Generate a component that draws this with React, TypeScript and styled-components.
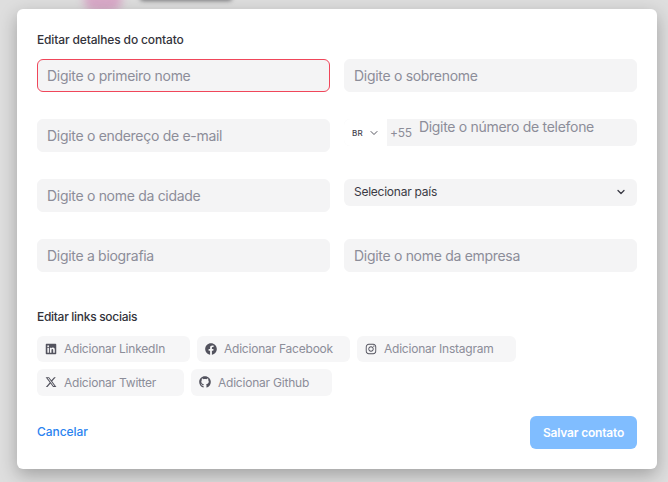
import React from 'react';
import styled, { createGlobalStyle } from 'styled-components';
import { FaFacebook, FaGithub, FaInstagram, FaLinkedin } from 'react-icons/fa';
import { FaXTwitter } from 'react-icons/fa6';
import { LuChevronDown } from 'react-icons/lu';

const GlobalStyle = createGlobalStyle`
    html, body {
        margin: 0;
        padding: 0;
        background: #dedede;
    }
    body {
        font-family: 'Inter', 'Liberation Sans', sans-serif;
    }
`;

const Page = styled.div`
    position: relative;
    width: 668px;
    height: 482px;
    overflow: hidden;
    background: #dedede;
    padding: 9px 11px 0 17px;
    box-sizing: border-box;
`;

const PinkBlob = styled.div`
    position: absolute;
    left: 84px;
    top: -12px;
    width: 38px;
    height: 24px;
    border-radius: 12px;
    background: #d9a9c8;
    filter: blur(4px);
`;

const DarkBlob = styled.div`
    position: absolute;
    left: 140px;
    top: -6px;
    width: 92px;
    height: 7px;
    border-radius: 4px;
    background: #77777a;
    filter: blur(2px);
`;

const Modal = styled.div`
    position: relative;
    width: 640px;
    height: 460px;
    box-sizing: border-box;
    padding: 23px 20px 20px;
    background: #ffffff;
    border-radius: 6px;
    box-shadow: 0 6px 18px rgba(0, 0, 0, 0.28);
    display: flex;
    flex-direction: column;
`;

const SectionTitle = styled.div<{ $spacing: number }>`
    font-size: 12px;
    line-height: 15px;
    font-weight: 500;
    letter-spacing: ${(p) => p.$spacing}px;
    color: #33333b;
`;

const FormGrid = styled.div`
    display: grid;
    grid-template-columns: 293px 293px;
    column-gap: 14px;
    grid-auto-rows: 33px;
    row-gap: 27px;
    align-items: start;
    margin-top: 12px;
`;

const Field = styled.div<{ $error?: boolean }>`
    height: 33px;
    box-sizing: border-box;
    padding: 0 9px;
    display: flex;
    align-items: center;
    background: #f4f4f5;
    border-radius: 6px;
    border: 1px solid ${(p) => (p.$error ? '#f0465a' : '#f4f4f5')};
    font-size: 14px;
    letter-spacing: -0.3px;
    color: #8c8d99;
`;

const PhoneField = styled.div`
    height: 27px;
    display: flex;
    background: #f4f4f5;
    border-radius: 6px;
    font-size: 14px;
    letter-spacing: -0.3px;
    color: #8c8d99;
`;

const CountryPicker = styled.div`
    width: 43px;
    box-sizing: border-box;
    padding-left: 8px;
    display: flex;
    align-items: center;
    gap: 5px;
    background: #ffffff;
    border-radius: 6px 0 0 6px;
    font-size: 8px;
    font-weight: 500;
    letter-spacing: 0.2px;
    color: #44444f;
`;

const DialCode = styled.span`
    margin-left: 3px;
    font-size: 12px;
    line-height: 27px;
    letter-spacing: -0.2px;
`;

const PhonePlaceholder = styled.span`
    margin-left: 7px;
    line-height: 15px;
`;

const SelectField = styled.div`
    height: 27px;
    box-sizing: border-box;
    padding: 0 10px 2px;
    display: flex;
    align-items: center;
    justify-content: space-between;
    background: #f4f4f5;
    border-radius: 6px;
    font-size: 12px;
    letter-spacing: -0.25px;
    color: #3a3a44;
`;

const SocialSection = styled.div`
    margin-top: 37px;
    display: flex;
    flex-direction: column;
    gap: 12px;
`;

const ChipRows = styled.div`
    display: flex;
    flex-direction: column;
    gap: 7px;
`;

const ChipRow = styled.div<{ $height: number }>`
    display: flex;
    gap: 7px;
    height: ${(p) => p.$height}px;
`;

const Chip = styled.div<{ $width: number }>`
    width: ${(p) => p.$width}px;
    box-sizing: border-box;
    padding: 0 0 1px 8px;
    display: flex;
    align-items: center;
    gap: 7px;
    background: #f6f6f7;
    border-radius: 6px;
    font-size: 12px;
    letter-spacing: -0.22px;
    color: #8c8d99;

    svg {
        width: 12px;
        height: 12px;
        color: #53535e;
        flex-shrink: 0;
    }
`;

const Footer = styled.div`
    margin-top: auto;
    display: flex;
    align-items: center;
    justify-content: space-between;
`;

const CancelLink = styled.a`
    margin-bottom: 2px;
    font-size: 12px;
    font-weight: 500;
    letter-spacing: -0.05px;
    color: #2a83f0;
`;

const SaveButton = styled.button`
    width: 107px;
    height: 33px;
    padding: 0 0 1px;
    border: none;
    border-radius: 6px;
    background: #80bdff;
    color: #ffffff;
    font-family: inherit;
    font-size: 12px;
    font-weight: 600;
    letter-spacing: -0.2px;
`;

function App() {
    return (
        <Page>
            <GlobalStyle />
            <PinkBlob />
            <DarkBlob />
            <Modal>
                <SectionTitle $spacing={-0.14}>Editar detalhes do contato</SectionTitle>
                <FormGrid>
                    <Field $error>Digite o primeiro nome</Field>
                    <Field>Digite o sobrenome</Field>
                    <Field>Digite o endereço de e-mail</Field>
                    <PhoneField>
                        <CountryPicker>
                            BR
                            <LuChevronDown size={12} strokeWidth={1.8} />
                        </CountryPicker>
                        <DialCode>+55</DialCode>
                        <PhonePlaceholder>Digite o número de telefone</PhonePlaceholder>
                    </PhoneField>
                    <Field>Digite o nome da cidade</Field>
                    <SelectField>
                        Selecionar país
                        <LuChevronDown size={12} strokeWidth={2.6} />
                    </SelectField>
                    <Field>Digite a biografia</Field>
                    <Field>Digite o nome da empresa</Field>
                </FormGrid>
                <SocialSection>
                    <SectionTitle $spacing={-0.3}>Editar links sociais</SectionTitle>
                    <ChipRows>
                        <ChipRow $height={26}>
                            <Chip $width={153}>
                                <FaLinkedin />
                                Adicionar LinkedIn
                            </Chip>
                            <Chip $width={153}>
                                <FaFacebook />
                                Adicionar Facebook
                            </Chip>
                            <Chip $width={159}>
                                <FaInstagram />
                                Adicionar Instagram
                            </Chip>
                        </ChipRow>
                        <ChipRow $height={27}>
                            <Chip $width={147}>
                                <FaXTwitter />
                                Adicionar Twitter
                            </Chip>
                            <Chip $width={141}>
                                <FaGithub />
                                Adicionar Github
                            </Chip>
                        </ChipRow>
                    </ChipRows>
                </SocialSection>
                <Footer>
                    <CancelLink>Cancelar</CancelLink>
                    <SaveButton>Salvar contato</SaveButton>
                </Footer>
            </Modal>
        </Page>
    );
}

export default App;
